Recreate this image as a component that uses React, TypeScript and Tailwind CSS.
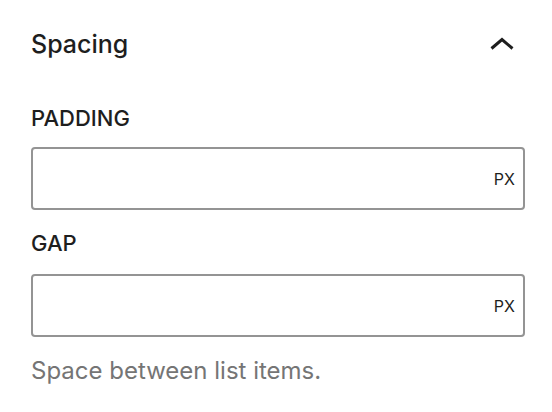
export default function App() {
  return (
    <div className="w-[552px] h-[412px] bg-white pl-[31px] pr-[27px] pt-[28px] font-['Inter',sans-serif] text-[#1e1e1e]">
      <div className="flex h-[32px] items-center justify-between">
        <h2 className="text-[25px] font-medium leading-[32px]">Spacing</h2>
        <svg width="26" height="16" viewBox="0 0 26 16" className="mr-[10px]" fill="none">
          <path d="M2.5 12.5 L13 3.5 L23.5 12.5" stroke="#1e1e1e" strokeWidth="3" />
        </svg>
      </div>

      <div className="mt-[44px] text-[22px] font-medium uppercase leading-[28px]">Padding</div>
      <UnitInput className="mt-[15px]" />

      <div className="mt-[19px] text-[22px] font-medium uppercase leading-[28px]">Gap</div>
      <UnitInput className="mt-[17px]" />

      <p className="mt-[18px] text-[24px] leading-[32px] text-[#757575]">Space between list items.</p>
    </div>
  );
}

function UnitInput({ className }: { className: string }) {
  return (
    <div className={`${className} flex h-[63px] items-center justify-end rounded-[4px] border-2 border-[#949494] pr-[8px]`}>
      <span className="text-[16px] leading-none">PX</span>
    </div>
  );
}
